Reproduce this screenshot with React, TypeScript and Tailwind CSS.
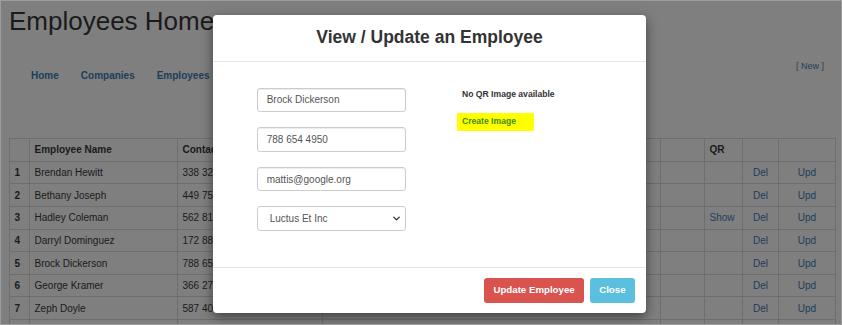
import { ChevronDown } from "lucide-react";

const ROWS = [
    { n: 1, name: "Brendan Hewitt", phone: "338 321 4470", qr: false },
    { n: 2, name: "Bethany Joseph", phone: "449 751 2276", qr: false },
    { n: 3, name: "Hadley Coleman", phone: "562 812 9035", qr: true },
    { n: 4, name: "Darryl Dominguez", phone: "172 881 6620", qr: false },
    { n: 5, name: "Brock Dickerson", phone: "788 654 4950", qr: false },
    { n: 6, name: "George Kramer", phone: "366 275 1198", qr: false },
    { n: 7, name: "Zeph Doyle", phone: "587 403 7712", qr: false },
];

const FIELDS = ["Brock Dickerson", "788 654 4950", "mattis@google.org"];

// page behind the modal is drawn already dimmed by the backdrop
const cell = "border border-[#6e6e6e] px-[4.5px] align-middle";
const dotted = "border-l-[#767676] [border-left-style:dotted]";
const link = "text-[#1d3d5c]";

export default function App() {
    return (
        <div className="relative h-[325px] w-[842px] overflow-hidden border border-[#9c9c9c] bg-[#7f7f7f] font-['Liberation_Sans',Arial,sans-serif] text-[#1a1a1a]">
            <div className="px-[8px]">
                <h1 className="mt-[6.5px] text-[26px] leading-none font-normal">Employees Home</h1>

                <div className="flex h-[104px] items-start justify-between">
                    <nav className={`ml-[22px] flex gap-[22px] pt-[35.5px] text-[10px] leading-[14px] font-bold ${link}`}>
                        <a>Home</a>
                        <a>Companies</a>
                        <a>Employees</a>
                    </nav>
                    <div className="mr-[9px] pt-[26.5px] text-[9px] leading-[12px] text-[#3c3c3c]">
                        [ <a className={link}>New</a> ]
                    </div>
                </div>

                <table className="w-[826px] table-fixed border-collapse text-[10px]">
                    <colgroup>
                        <col className="w-[20px]" />
                        <col className="w-[148px]" />
                        <col className="w-[145px]" />
                        <col className="w-[338px]" />
                        <col className="w-[44px]" />
                        <col className="w-[38px]" />
                        <col className="w-[36px]" />
                        <col className="w-[57px]" />
                    </colgroup>
                    <thead>
                        <tr className="h-[23.4px] text-left font-bold">
                            <th className={cell}></th>
                            <th className={cell}>Employee Name</th>
                            <th className={cell}>Contact</th>
                            <th className={cell}></th>
                            <th className={`${cell} ${dotted}`}></th>
                            <th className={cell}>QR</th>
                            <th className={cell}></th>
                            <th className={cell}></th>
                        </tr>
                    </thead>
                    <tbody>
                        {ROWS.map((r) => (
                            <tr key={r.n} className="h-[22.6px]">
                                <td className={`${cell} font-bold`}>{r.n}</td>
                                <td className={cell}>{r.name}</td>
                                <td className={cell}>{r.phone}</td>
                                <td className={cell}></td>
                                <td className={`${cell} ${dotted}`}></td>
                                <td className={`${cell} ${link}`}>{r.qr ? "Show" : ""}</td>
                                <td className={`${cell} text-center ${link}`}>Del</td>
                                <td className={`${cell} text-center ${link}`}>Upd</td>
                            </tr>
                        ))}
                        <tr className="h-[22.6px]">
                            <td className={cell}></td>
                            <td className={cell}></td>
                            <td className={cell}></td>
                            <td className={cell}></td>
                            <td className={`${cell} ${dotted}`}></td>
                            <td className={cell}></td>
                            <td className={cell}></td>
                            <td className={cell}></td>
                        </tr>
                    </tbody>
                </table>
            </div>

            <div className="absolute top-[14px] left-[212px] flex h-[298px] w-[433px] flex-col rounded-[4px] bg-white shadow-[0_4px_12px_rgba(0,0,0,0.5)]">
                <div className="flex h-[47px] items-center justify-center border-b border-[#e5e5e5]">
                    <h4 className="text-[17.5px] leading-none font-bold text-[#333333]">View / Update an Employee</h4>
                </div>

                <div className="flex flex-1 pt-[25.7px] pl-[43.7px]">
                    <div className="flex w-[149px] flex-col gap-[15px]">
                        {FIELDS.map((f) => (
                            <div
                                key={f}
                                className="flex h-[24.6px] items-center rounded-[3px] border border-[#cccccc] px-[9px] text-[10px] text-[#555555] shadow-[inset_0_1px_1px_rgba(0,0,0,0.075)]"
                            >
                                {f}
                            </div>
                        ))}
                        <div className="flex h-[24.6px] items-center justify-between rounded-[3px] border border-[#cccccc] pr-[3px] pl-[12px] text-[10px] text-[#555555]">
                            <span>Luctus Et Inc</span>
                            <ChevronDown size={11} strokeWidth={3} className="text-[#333333]" />
                        </div>
                    </div>

                    <div className="ml-[51px] flex flex-col items-start">
                        <p className="mt-[1.5px] pl-[5.3px] text-[8.6px] leading-[10px] font-bold text-[#333333]">
                            No QR Image available
                        </p>
                        <a className="mt-[14px] flex h-[17.4px] w-[77.6px] items-center bg-[#ffff00] pl-[5.3px] text-[8.6px] font-bold text-[#3e8e12]">
                            Create Image
                        </a>
                    </div>
                </div>

                <div className="flex h-[46.3px] items-center justify-end gap-[5.3px] border-t border-[#e5e5e5] pr-[11px]">
                    <button className="h-[25.6px] w-[100.7px] rounded-[3px] bg-[#d9534f] text-[9.7px] font-bold text-white">
                        Update Employee
                    </button>
                    <button className="h-[25.6px] w-[45.3px] rounded-[3px] bg-[#5bc0de] text-[9.7px] font-bold text-white">
                        Close
                    </button>
                </div>
            </div>
        </div>
    );
}
